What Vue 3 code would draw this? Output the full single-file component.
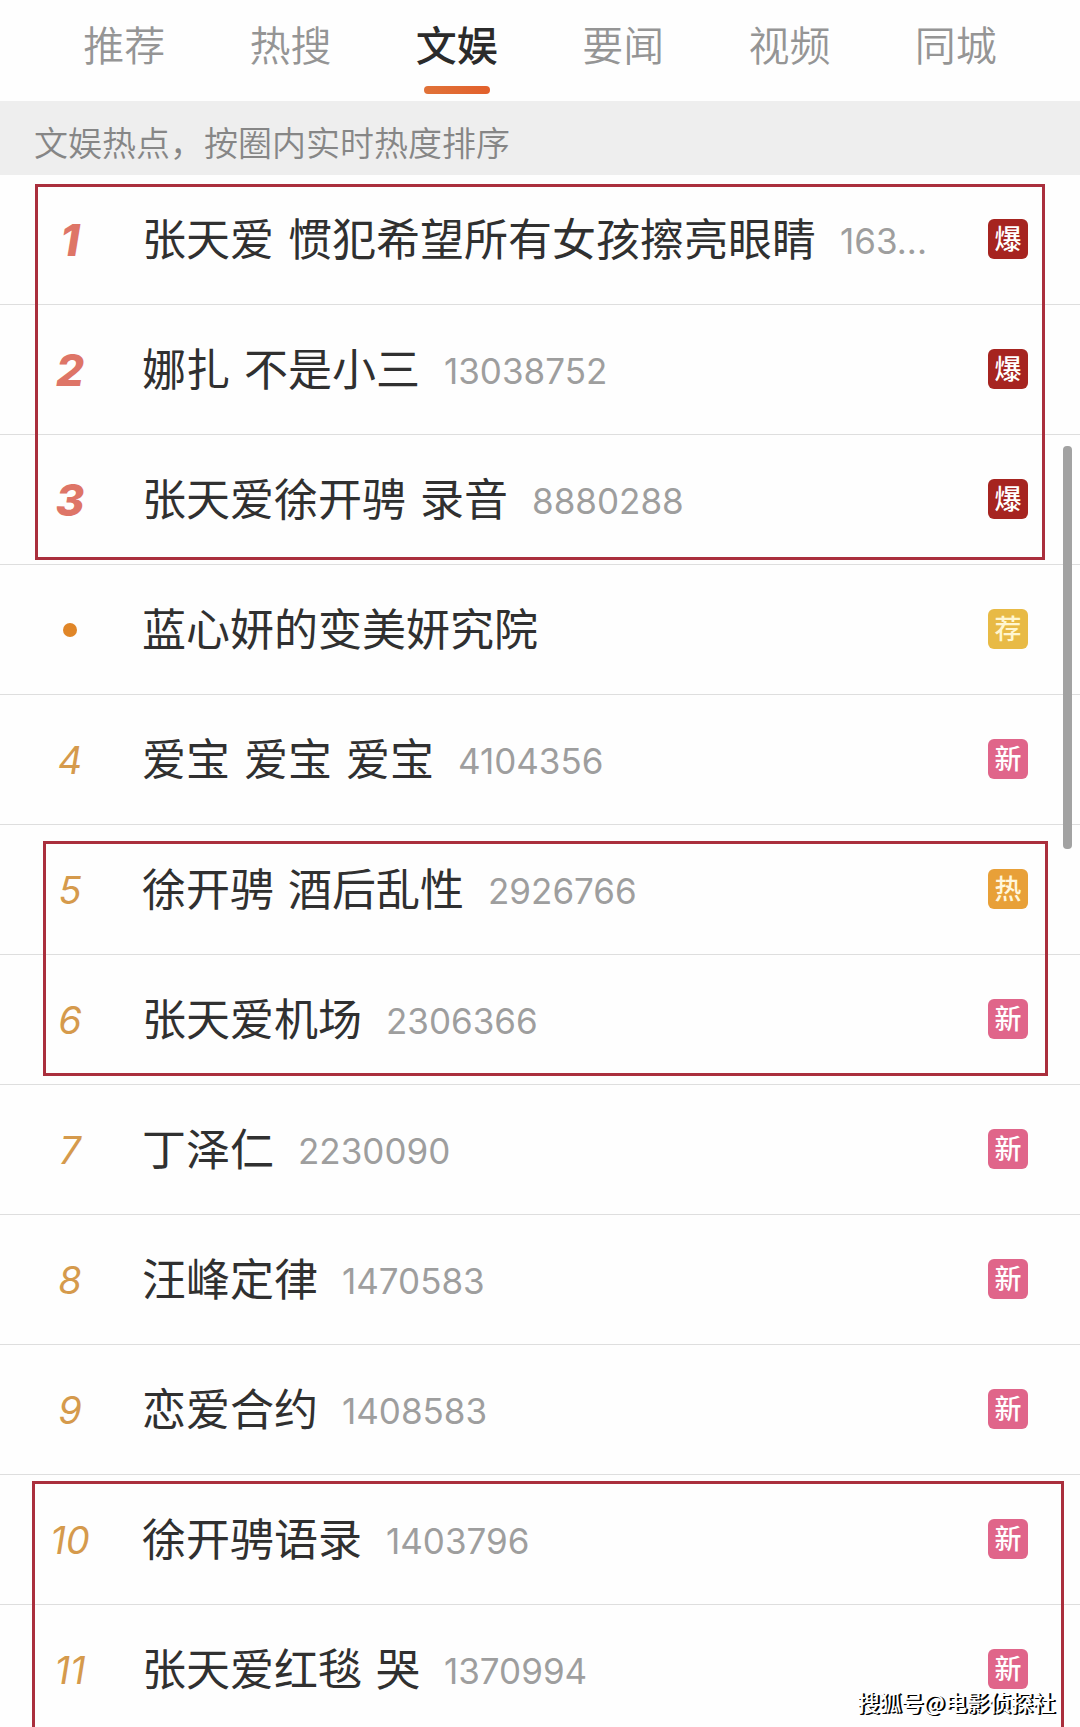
<script setup>
import { ref } from 'vue'

const tabs = ['推荐', '热搜', '文娱', '要闻', '视频', '同城']
const activeTab = ref('文娱')

const badgeKinds = { 爆: 'boom', 荐: 'promo', 新: 'fresh', 热: 'hot' }

const groups = [
  {
    frame: 'frame-top',
    rows: [
      { rank: '1', title: '张天爱 惯犯希望所有女孩擦亮眼睛', count: '163...', badge: '爆' },
      { rank: '2', title: '娜扎 不是小三', count: '13038752', badge: '爆' },
      { rank: '3', title: '张天爱徐开骋 录音', count: '8880288', badge: '爆' }
    ]
  },
  {
    rows: [
      { rank: '', title: '蓝心妍的变美妍究院', count: '', badge: '荐' },
      { rank: '4', title: '爱宝 爱宝 爱宝', count: '4104356', badge: '新' }
    ]
  },
  {
    frame: 'frame-middle',
    rows: [
      { rank: '5', title: '徐开骋 酒后乱性', count: '2926766', badge: '热' },
      { rank: '6', title: '张天爱机场', count: '2306366', badge: '新' }
    ]
  },
  {
    rows: [
      { rank: '7', title: '丁泽仁', count: '2230090', badge: '新' },
      { rank: '8', title: '汪峰定律', count: '1470583', badge: '新' },
      { rank: '9', title: '恋爱合约', count: '1408583', badge: '新' }
    ]
  },
  {
    frame: 'frame-bottom',
    rows: [
      { rank: '10', title: '徐开骋语录', count: '1403796', badge: '新' },
      { rank: '11', title: '张天爱红毯 哭', count: '1370994', badge: '新' }
    ]
  }
]
</script>

<template>
  <div class="page">
    <nav class="tabs">
      <button
        v-for="tab in tabs"
        :key="tab"
        type="button"
        class="tab"
        :class="{ active: tab === activeTab }"
        @click="activeTab = tab"
      >
        {{ tab }}
      </button>
    </nav>

    <p class="notice">文娱热点，按圈内实时热度排序</p>

    <main>
      <div v-for="(group, i) in groups" :key="i" class="group">
        <a v-for="row in group.rows" :key="row.title" href="#" class="row">
          <span class="rank" :class="{ top: ['1', '2', '3'].includes(row.rank) }">
            <template v-if="row.rank">{{ row.rank }}</template>
            <i v-else class="dot"></i>
          </span>
          <span class="text">
            <span class="title">{{ row.title }}</span>
            <span v-if="row.count" class="count">{{ row.count }}</span>
          </span>
          <span class="badge" :class="badgeKinds[row.badge]">{{ row.badge }}</span>
        </a>
        <div v-if="group.frame" class="frame" :class="group.frame"></div>
      </div>
    </main>

    <div class="scrollbar"></div>
    <div class="watermark">搜狐号@电影侦探社</div>
  </div>
</template>

<style>
body {
  margin: 0;
  background: #fefefe;
}
</style>

<style scoped>
.page {
  position: relative;
  height: 100vh;
  overflow: hidden;
  background: #fefefe;
  font-family: Inter, "Noto Sans CJK SC", sans-serif;
}

.tabs {
  display: grid;
  grid-template-columns: repeat(6, 1fr);
  padding: 0 41px;
  height: 101px;
}

.tab {
  position: relative;
  border: 0;
  padding: 0 0 16px;
  background: none;
  color: #959595;
  font: 350 41px/60px "Noto Sans CJK SC", sans-serif;
  cursor: pointer;
}

.tab.active {
  color: #2b2b2b;
  font-weight: 500;
}

.tab.active::after {
  content: "";
  position: absolute;
  left: 50%;
  bottom: 7px;
  width: 66px;
  height: 8px;
  margin-left: -33px;
  border-radius: 4px;
  background: linear-gradient(90deg, #e07238, #e2602c);
}

.notice {
  margin: 0;
  padding: 5px 34px 0;
  height: 69px;
  background: #eeeeee;
  color: #868686;
  font: 350 34px/72px "Noto Sans CJK SC", sans-serif;
}

.group {
  position: relative;
}

.row {
  display: flex;
  align-items: center;
  box-sizing: border-box;
  height: 130px;
  padding: 0 52px 0 0;
  border-bottom: 1px solid #dedede;
  color: inherit;
  text-decoration: none;
}

.rank {
  display: flex;
  justify-content: center;
  width: 140px;
  margin-right: 2px;
  color: #d59a4c;
  font-size: 38px;
  font-style: italic;
  line-height: 48px;
}

.rank.top {
  color: #de7567;
  font-size: 44px;
  font-weight: 800;
}

.dot {
  width: 14px;
  height: 14px;
  border-radius: 50%;
  background: #e08628;
}

.text {
  display: flex;
  flex: 1;
  align-items: center;
  gap: 24px;
  padding-top: 3px;
  white-space: nowrap;
}

.title {
  color: #303030;
  font: 400 44px/64px "DejaVu Sans", "Noto Sans CJK SC", sans-serif;
}

.count {
  color: #9e9e9e;
  font-size: 35px;
  font-weight: 400;
  line-height: 64px;
}

.badge {
  width: 40px;
  height: 40px;
  margin-bottom: 2px;
  border-radius: 6px;
  color: #fff;
  font: 500 27px/38px "Noto Sans CJK SC", sans-serif;
  text-align: center;
}

.boom {
  background: #a62420;
}

.promo {
  background: #e8ba45;
  color: #fff6d0;
}

.fresh {
  background: #e0658a;
}

.hot {
  background: #e8a038;
  color: #fff6dc;
}

.frame {
  position: absolute;
  border: 3px solid #aa2f3d;
  pointer-events: none;
}

.frame-top {
  inset: 9px 35px 5px 35px;
}

.frame-middle {
  inset: 16px 32px 9px 43px;
}

.frame-bottom {
  inset: 6px 16px 0 32px;
}

.scrollbar {
  position: absolute;
  top: 446px;
  right: 8px;
  width: 9px;
  height: 403px;
  border-radius: 4px;
  background: #a2a2a2;
}

.watermark {
  position: absolute;
  right: 25px;
  bottom: 10px;
  color: #fff;
  font: 500 22px/32px "Noto Sans CJK SC", sans-serif;
  text-shadow: 1px 1px 0 #000, 2px 1px 0 #000;
}
</style>
